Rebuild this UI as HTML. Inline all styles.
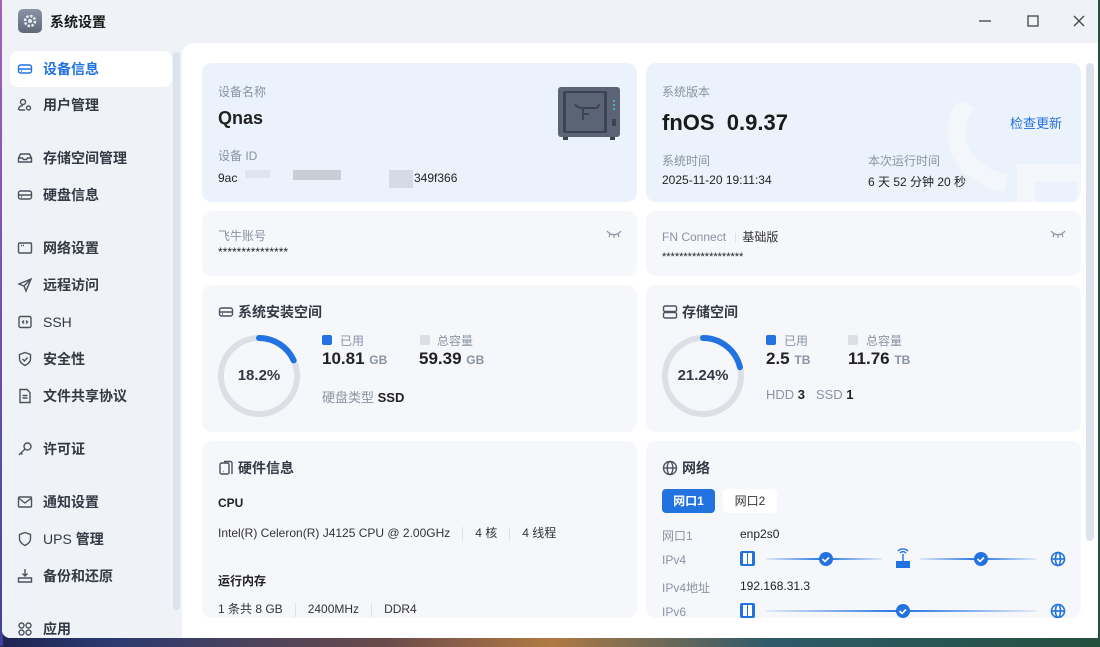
<!DOCTYPE html>
<html><head><meta charset="utf-8">
<style>
*{margin:0;padding:0;box-sizing:border-box}
body{width:1100px;height:646px;overflow:hidden;position:relative;font-family:"Liberation Sans","Noto Sans CJK SC",sans-serif;background:linear-gradient(90deg,#1e2450 0%,#2a3a70 10%,#6a4a4a 35%,#b07a44 50%,#2e5a6a 70%,#24503f 100%)}
.a{position:absolute}
.win{left:2px;top:0;width:1096px;height:638px;background:#eff2f7;border-radius:0 0 8px 8px;overflow:hidden}
.strip{left:0;top:0;width:3px;height:646px;background:linear-gradient(#a060c0,#4040a0)}
.nav{left:10px;width:162px;height:36px;font-size:14px;color:#333a45;font-weight:bold;display:flex;align-items:center;padding-left:7px;border-radius:8px}
.nav svg{width:16px;height:16px;margin-right:10px;fill:none;stroke:#4b5260;stroke-width:1.4}
.nav.act{background:#fff;color:#2272e0}
.nav.act svg{stroke:#2272e0}
.main{left:182px;top:43px;width:916px;height:595px;background:#fff;border-radius:12px 0 0 0}
.card{background:#f5f7fb;border-radius:10px}
.blue{background:#ebf2fb}
.lbl{font-size:12px;color:#8a93a3}
.val{font-size:12px;color:#222}
.h{font-size:14px;font-weight:bold;color:#333a45;display:flex;align-items:center}
.h svg{width:16px;height:16px;margin-right:4px;fill:none;stroke:#4b5260;stroke-width:1.4}
.big{font-size:18px;font-weight:bold;color:#222}
.unit{font-size:12px;color:#8a93a3;font-weight:bold}
.sep{display:inline-block;width:1px;height:14px;background:#dde2ea;vertical-align:middle;margin:0 12px}
</style></head><body>
<div class="a strip"></div>
<div class="a win">
 <div class="a" style="left:16px;top:9px;width:24px;height:24px;border-radius:5px;background:linear-gradient(#8a94a6,#5e6878)"><svg width="24" height="24" viewBox="0 0 24 24"><circle cx="12" cy="12" r="5" fill="none" stroke="#e8ebf0" stroke-width="2.5" stroke-dasharray="2.5 1.4"/><circle cx="12" cy="12" r="2" fill="#e8ebf0"/></svg></div>
 <div class="a" style="left:48px;top:12px;font-size:14px;font-weight:bold;color:#1a1a1a">系统设置</div>
 <svg class="a" style="left:976px;top:14px" width="14" height="14"><line x1="1" y1="7" x2="13" y2="7" stroke="#444" stroke-width="1.3"/></svg>
 <svg class="a" style="left:1024px;top:14px" width="14" height="14"><rect x="2" y="2" width="10" height="10" fill="none" stroke="#444" stroke-width="1.3"/></svg>
 <svg class="a" style="left:1070px;top:14px" width="14" height="14"><path d="M2 2L12 12M12 2L2 12" stroke="#444" stroke-width="1.3"/></svg>

 <div class="a nav act" style="left:8px;top:51px"><svg viewBox="0 0 16 16"><rect x="1.5" y="4" width="13" height="8" rx="2"/><path d="M1.5 8h13M4 10h1"/></svg>设备信息</div>
 <div class="a nav" style="left:8px;top:87px"><svg viewBox="0 0 16 16"><circle cx="6" cy="5" r="2.5"/><path d="M1.5 13c0-3 2-4.5 4.5-4.5M2 13h6"/><circle cx="11.5" cy="11" r="2"/></svg>用户管理</div>
 <div class="a nav" style="left:8px;top:140px"><svg viewBox="0 0 16 16"><path d="M1.5 8l2-4h9l2 4v4h-13z M1.5 8h4l1 1.5h3l1-1.5h4"/></svg>存储空间管理</div>
 <div class="a nav" style="left:8px;top:177px"><svg viewBox="0 0 16 16"><rect x="1.5" y="4" width="13" height="8" rx="2"/><path d="M1.5 8h13M4 10h1"/></svg>硬盘信息</div>
 <div class="a nav" style="left:8px;top:230px"><svg viewBox="0 0 16 16"><rect x="1.5" y="3" width="13" height="10" rx="1"/><path d="M4 5.5h1M6 5.5h1"/></svg>网络设置</div>
 <div class="a nav" style="left:8px;top:267px"><svg viewBox="0 0 16 16"><path d="M14 2L2 7l5 2 2 5z M7 9l7-7"/></svg>远程访问</div>
 <div class="a nav" style="left:8px;top:304px;font-weight:normal"><svg viewBox="0 0 16 16"><rect x="2" y="2.5" width="12" height="11" rx="1.5"/><path d="M7 6.5L5.5 8 7 9.5M9 6.5L10.5 8 9 9.5"/></svg>SSH</div>
 <div class="a nav" style="left:8px;top:341px"><svg viewBox="0 0 16 16"><path d="M8 1.5l5.5 2v4.5c0 3-2.5 5-5.5 6.5-3-1.5-5.5-3.5-5.5-6.5V3.5z M5.5 8l2 2 3-3.5"/></svg>安全性</div>
 <div class="a nav" style="left:8px;top:378px"><svg viewBox="0 0 16 16"><path d="M3 1.5h7l3 3v10H3z M5.5 7.5h5M5.5 10h5"/></svg>文件共享协议</div>
 <div class="a nav" style="left:8px;top:431px"><svg viewBox="0 0 16 16"><circle cx="10.5" cy="5.5" r="3.5"/><path d="M8 8L2 14M4 12l1.5 1.5"/></svg>许可证</div>
 <div class="a nav" style="left:8px;top:484px"><svg viewBox="0 0 16 16"><rect x="1.5" y="3" width="13" height="10" rx="1"/><path d="M1.5 4l6.5 5 6.5-5"/></svg>通知设置</div>
 <div class="a nav" style="left:8px;top:521px;font-weight:normal"><svg viewBox="0 0 16 16"><path d="M8 1.5l5.5 2v4.5c0 3-2.5 5-5.5 6.5-3-1.5-5.5-3.5-5.5-6.5V3.5z"/></svg>UPS <b style="margin-left:4px">管理</b></div>
 <div class="a nav" style="left:8px;top:558px"><svg viewBox="0 0 16 16"><path d="M8 1v7M5.5 5.5L8 8l2.5-2.5M1.5 10h13v4h-13z"/></svg>备份和还原</div>
 <div class="a" style="left:171px;top:52px;width:7px;height:558px;border-radius:4px;background:#dde3ec"></div>
</div>

<div class="a main"></div>
<div class="a" style="left:1086px;top:63px;width:8px;height:478px;border-radius:4px;background:#dde3ec"></div>

<!-- row1 left -->
<div class="a card blue" style="left:202px;top:63px;width:435px;height:139px"></div>
<div class="a lbl" style="left:218px;top:83px">设备名称</div>
<div class="a big" style="left:218px;top:108px">Qnas</div>
<div class="a lbl" style="left:218px;top:147px">设备 ID</div>
<div class="a val" style="left:218px;top:171px">9ac</div>
<div class="a" style="left:245px;top:170px;width:25px;height:8px;background:#dfe5ee"></div>
<div class="a" style="left:293px;top:170px;width:48px;height:10px;background:#c8cdd6"></div>
<div class="a" style="left:389px;top:170px;width:24px;height:18px;background:#d5dbe4"></div>
<div class="a val" style="left:414px;top:171px">349f366</div>
<svg class="a" style="left:557px;top:86px" width="64" height="54" viewBox="0 0 64 54"><rect x="1" y="1" width="62" height="50" rx="3" fill="#5a6474"/><rect x="6" y="5" width="44" height="42" rx="2" fill="#3c4452"/><rect x="9" y="7" width="38" height="38" fill="#5a6474"/><path d="M18 18c2 4 6 4 10 4h10c3 0 4-2 4-4M26 22v12M26 28h6" stroke="#3c4452" stroke-width="2" fill="none"/><circle cx="57" cy="15" r="1" fill="#4cd"/><circle cx="57" cy="19" r="1" fill="#4cd"/><circle cx="57" cy="23" r="1" fill="#4cd"/><rect x="55" y="33" width="4" height="7" fill="#3c4452"/><rect x="6" y="51" width="5" height="3" fill="#3c4452"/><rect x="53" y="51" width="5" height="3" fill="#3c4452"/></svg>

<!-- row1 right -->
<div class="a card blue" style="left:646px;top:63px;width:435px;height:139px;overflow:hidden"><svg class="a" style="left:300px;top:40px" width="140" height="110"><path d="M20 0c-20 30-10 70 40 80 M80 70h60v40H80z" stroke="#f3f7fc" stroke-width="18" fill="none"/></svg></div>
<div class="a lbl" style="left:662px;top:83px">系统版本</div>
<div class="a" style="left:662px;top:110px;font-size:22px;font-weight:bold;color:#1a1a1a">fnOS&nbsp;&nbsp;0.9.37</div>
<div class="a" style="left:1010px;top:113px;font-size:13px;color:#2272e0">检查更新</div>
<div class="a lbl" style="left:662px;top:152px">系统时间</div>
<div class="a val" style="left:662px;top:173px">2025-11-20 19:11:34</div>
<div class="a lbl" style="left:868px;top:152px">本次运行时间</div>
<div class="a val" style="left:868px;top:173px">6 天 52 分钟 20 秒</div>

<!-- row2 -->
<div class="a card" style="left:202px;top:211px;width:435px;height:65px"></div>
<div class="a lbl" style="left:218px;top:227px">飞牛账号</div>
<div class="a val" style="left:218px;top:245px">***************</div>
<svg class="a" style="left:606px;top:229px" width="16" height="10"><path d="M1 2c4 5 10 5 14 0M4 5l-1 3M8 6v3M12 5l1 3" stroke="#8a93a3" fill="none" stroke-width="1.2"/></svg>
<div class="a card" style="left:646px;top:211px;width:435px;height:65px"></div>
<div class="a lbl" style="left:662px;top:228px;font-size:12px">FN Connect <span class="sep" style="margin:0 6px;height:10px"></span><span style="color:#333">基础版</span></div>
<div class="a val" style="left:662px;top:251px;font-size:11px">*******************</div>
<svg class="a" style="left:1050px;top:229px" width="16" height="10"><path d="M1 2c4 5 10 5 14 0M4 5l-1 3M8 6v3M12 5l1 3" stroke="#8a93a3" fill="none" stroke-width="1.2"/></svg>

<!-- row3 left -->
<div class="a card" style="left:202px;top:285px;width:435px;height:147px"></div>
<div class="a h" style="left:218px;top:302px"><svg viewBox="0 0 16 16"><rect x="1.5" y="4" width="13" height="8" rx="2"/><path d="M1.5 8h13M4 10h1"/></svg>系统安装空间</div>
<svg class="a" style="left:217px;top:334px" width="84" height="84"><circle cx="42" cy="42" r="38" fill="none" stroke="#dcdfe5" stroke-width="6"/><circle cx="42" cy="42" r="38" fill="none" stroke="#2272e0" stroke-width="6" stroke-linecap="round" stroke-dasharray="43.5 300" transform="rotate(-90 42 42)"/></svg>
<div class="a" style="left:217px;top:367px;width:84px;text-align:center;font-size:15px;font-weight:bold;color:#333a45">18.2%</div>
<div class="a" style="left:322px;top:335px;width:10px;height:10px;border-radius:2px;background:#2272e0"></div>
<div class="a lbl" style="left:340px;top:332px">已用</div>
<div class="a" style="left:420px;top:335px;width:10px;height:10px;border-radius:2px;background:#dcdfe5"></div>
<div class="a lbl" style="left:437px;top:332px">总容量</div>
<div class="a big" style="left:322px;top:349px;font-size:17px">10.81 <span class="unit">GB</span></div>
<div class="a big" style="left:419px;top:349px;font-size:17px">59.39 <span class="unit">GB</span></div>
<div class="a" style="left:322px;top:387px;font-size:13px;color:#8a93a3">硬盘类型 <b style="color:#222">SSD</b></div>

<!-- row3 right -->
<div class="a card" style="left:646px;top:285px;width:435px;height:147px"></div>
<div class="a h" style="left:662px;top:302px"><svg viewBox="0 0 16 16"><rect x="1.5" y="2" width="13" height="5.5" rx="1.5"/><rect x="1.5" y="8.5" width="13" height="5.5" rx="1.5"/></svg>存储空间</div>
<svg class="a" style="left:661px;top:334px" width="84" height="84"><circle cx="42" cy="42" r="38" fill="none" stroke="#dcdfe5" stroke-width="6"/><circle cx="42" cy="42" r="38" fill="none" stroke="#2272e0" stroke-width="6" stroke-linecap="round" stroke-dasharray="50.7 300" transform="rotate(-90 42 42)"/></svg>
<div class="a" style="left:661px;top:367px;width:84px;text-align:center;font-size:15px;font-weight:bold;color:#333a45">21.24%</div>
<div class="a" style="left:766px;top:335px;width:10px;height:10px;border-radius:2px;background:#2272e0"></div>
<div class="a lbl" style="left:784px;top:332px">已用</div>
<div class="a" style="left:848px;top:335px;width:10px;height:10px;border-radius:2px;background:#dcdfe5"></div>
<div class="a lbl" style="left:866px;top:332px">总容量</div>
<div class="a big" style="left:766px;top:349px;font-size:17px">2.5 <span class="unit">TB</span></div>
<div class="a big" style="left:848px;top:349px;font-size:17px">11.76 <span class="unit">TB</span></div>
<div class="a" style="left:766px;top:387px;font-size:13px;color:#8a93a3">HDD <b style="color:#222">3</b>&nbsp;&nbsp;&nbsp;SSD <b style="color:#222">1</b></div>

<!-- row4 left -->
<div class="a card" style="left:202px;top:441px;width:435px;height:177px"></div>
<div class="a h" style="left:218px;top:458px"><svg viewBox="0 0 16 16"><rect x="2" y="3" width="9" height="11" rx="1.5"/><path d="M6 1.5h6.5a1.5 1.5 0 0 1 1.5 1.5v11M5 11.5h.5"/></svg>硬件信息</div>
<div class="a" style="left:218px;top:496px;font-size:12px;font-weight:bold;color:#222">CPU</div>
<div class="a val" style="left:218px;top:524px;color:#333">Intel(R) Celeron(R) J4125 CPU @ 2.00GHz<span class="sep"></span>4 核<span class="sep"></span>4 线程</div>
<div class="a" style="left:218px;top:572px;font-size:12px;font-weight:bold;color:#222">运行内存</div>
<div class="a val" style="left:218px;top:600px;color:#333">1 条共 8 GB<span class="sep"></span>2400MHz<span class="sep"></span>DDR4</div>

<!-- row4 right -->
<div class="a card" style="left:646px;top:441px;width:435px;height:177px"></div>
<div class="a h" style="left:662px;top:458px"><svg viewBox="0 0 16 16"><circle cx="8" cy="8" r="6.5"/><ellipse cx="8" cy="8" rx="2.8" ry="6.5"/><path d="M1.5 8h13"/></svg>网络</div>
<div class="a" style="left:662px;top:489px;width:53px;height:24px;border-radius:4px;background:#2272e0;color:#fff;font-size:12px;font-weight:bold;text-align:center;line-height:24px">网口1</div>
<div class="a" style="left:723px;top:489px;width:54px;height:24px;border-radius:4px;background:#fff;color:#333;font-size:12px;text-align:center;line-height:24px">网口2</div>
<div class="a lbl" style="left:662px;top:527px">网口1</div><div class="a val" style="left:740px;top:527px">enp2s0</div>
<div class="a lbl" style="left:662px;top:553px">IPv4</div>
<div class="a lbl" style="left:662px;top:579px">IPv4地址</div><div class="a val" style="left:740px;top:579px">192.168.31.3</div>
<div class="a lbl" style="left:662px;top:605px">IPv6</div>
<svg class="a" style="left:738px;top:548px" width="330" height="70">
<defs><linearGradient id="g" x1="0" x2="1"><stop offset="0" stop-color="#2272e0" stop-opacity=".1"/><stop offset=".5" stop-color="#2272e0"/><stop offset="1" stop-color="#2272e0" stop-opacity=".1"/></linearGradient></defs>
<g fill="#2272e0"><rect x="2" y="3" width="15" height="15" rx="2"/><rect x="2" y="55" width="15" height="15" rx="2"/></g>
<g fill="#fff"><rect x="5" y="5" width="4" height="11"/><rect x="10" y="5" width="4" height="11"/><rect x="5" y="57" width="4" height="11"/><rect x="10" y="57" width="4" height="11"/></g>
<rect x="28" y="10" width="116" height="2" fill="url(#g)"/><rect x="182" y="10" width="116" height="2" fill="url(#g)"/><rect x="28" y="62" width="270" height="2" fill="url(#g)"/>
<circle cx="88" cy="11" r="7" fill="#2272e0"/><circle cx="243" cy="11" r="7" fill="#2272e0"/><circle cx="165" cy="63" r="7" fill="#2272e0"/>
<path d="M84.5 11l2.5 2.5 4-4M239.5 11l2.5 2.5 4-4M161.5 63l2.5 2.5 4-4" stroke="#fff" stroke-width="1.6" fill="none"/>
<path d="M158 13h14v7h-14z" fill="#2272e0"/><path d="M165 13V6M162 5a4 4 0 0 1 6 0M160 3a7 7 0 0 1 10 0" stroke="#2272e0" stroke-width="1.4" fill="none"/>
<g stroke="#2272e0" stroke-width="1.6" fill="none"><circle cx="320" cy="11" r="6.5"/><ellipse cx="320" cy="11" rx="2.5" ry="6.5"/><path d="M313.5 11h13"/><circle cx="320" cy="63" r="6.5"/><ellipse cx="320" cy="63" rx="2.5" ry="6.5"/><path d="M313.5 63h13"/></g>
</svg>
<div class="a" style="left:182px;top:618px;width:916px;height:20px;background:#fff;border-radius:0 0 8px 0"></div>
<div class="a" style="left:2px;top:618px;width:180px;height:20px;background:#eff2f7;border-radius:0 0 0 8px"></div>
<div class="a nav" style="left:10px;top:611px"><svg viewBox="0 0 16 16"><circle cx="4.5" cy="4.5" r="2.5"/><circle cx="11.5" cy="4.5" r="2.5"/><circle cx="4.5" cy="11.5" r="2.5"/><circle cx="11.5" cy="11.5" r="2.5"/></svg>应用</div>
</body></html>
